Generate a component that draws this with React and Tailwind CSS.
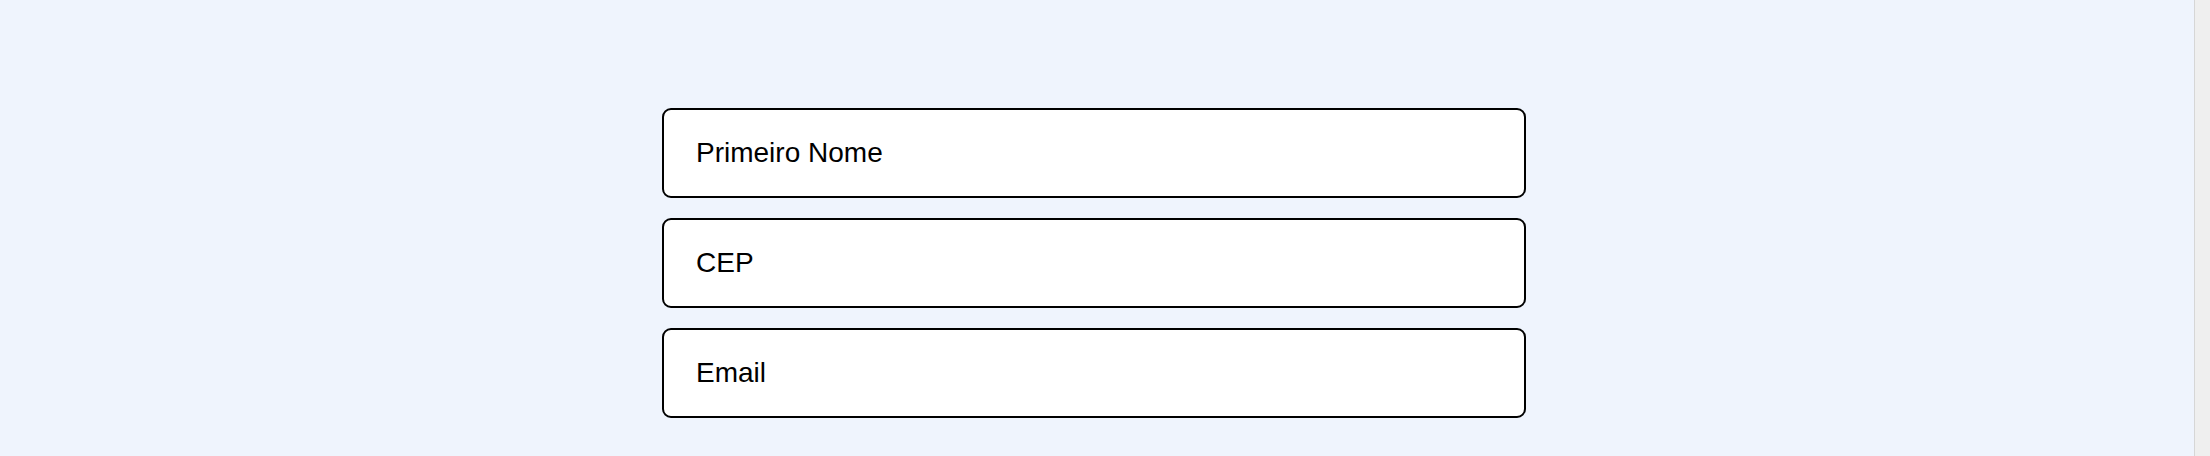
export default function App() {
  const fields = ["Primeiro Nome", "CEP", "Email"];
  return (
    <div className="flex h-[456px] w-[2210px] overflow-hidden bg-[#eff4fd]" style={{ fontFamily: '"Liberation Sans", Arial, sans-serif' }}>
      <div className="flex flex-1 flex-col gap-[20px] pl-[662px] pt-[108px]">
        {fields.map((f) => (
          <div
            key={f}
            className="flex h-[90px] w-[864px] shrink-0 items-center rounded-[9px] border-2 border-black bg-white pl-[32px] text-[28px] text-black"
          >
            {f}
          </div>
        ))}
      </div>
      <div className="h-full w-[16px] shrink-0 border-l border-[#d6d6d6] bg-[#efefef]" />
    </div>
  );
}
